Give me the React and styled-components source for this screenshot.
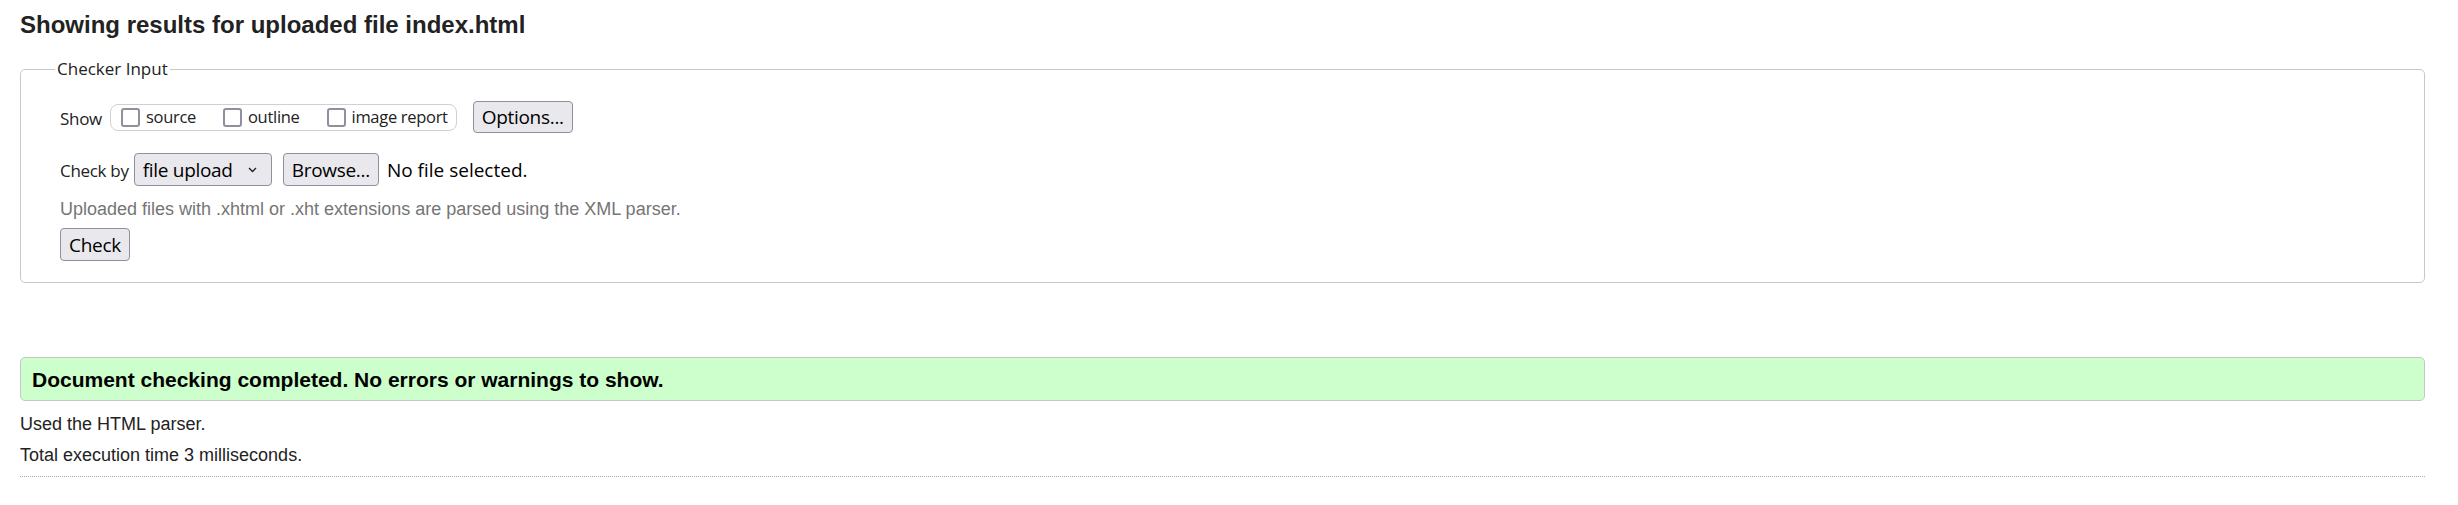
import React from 'react';
import styled, { createGlobalStyle } from 'styled-components';

const GlobalStyle = createGlobalStyle`
    body {
        margin: 0;
        background: #fff;
        color: #222;
        font-family: "Liberation Sans", Arial, sans-serif;
    }
`;

const Page = styled.div`
    padding: 10px 33px 0 20px;
`;

const Title = styled.h2`
    margin: 0;
    font-size: 24px;
    line-height: 30px;
    font-weight: bold;
    color: #222;
`;

const Fieldset = styled.fieldset`
    margin: 18px 0 0;
    padding: 21px 38px 21px 39px;
    min-width: 0;
    border: 1px solid #c8c8c8;
    border-radius: 5px;
    font-family: "Open Sans", "Noto Sans", sans-serif;
    letter-spacing: -0.3px;
`;

const Legend = styled.legend`
    margin-left: -5px;
    padding: 0 2px;
    font-size: 17px;
    line-height: 22px;
    letter-spacing: 0;
    color: #222;
`;

const Row = styled.div`
    display: flex;
    align-items: center;
    height: ${p => p.$h}px;
    margin-top: ${p => p.$mt || 0}px;
`;

const Label = styled.span`
    padding-top: 3px;
    font-size: 17px;
    line-height: 22px;
    color: #222;
`;

const Pill = styled.div`
    display: flex;
    align-items: center;
    gap: 27px;
    height: 25px;
    margin-left: 8px;
    padding: 0 8px 0 10px;
    border: 1px solid #d0d0d0;
    border-radius: 8px;
`;

const Option = styled.label`
    display: flex;
    align-items: center;
    gap: 6px;
    font-size: 16.5px;
    line-height: 22px;
    color: #222;
`;

const Box = styled.input.attrs({ type: 'checkbox' })`
    appearance: none;
    margin: 0;
    width: 19px;
    height: 19px;
    border: 2px solid #8f8f9d;
    border-radius: 3px;
    background: #fff;
`;

const Button = styled.button`
    height: ${p => p.$h || 33}px;
    margin-left: ${p => p.$ml || 0}px;
    padding: 0 8px;
    font-family: "Open Sans", "Noto Sans", sans-serif;
    font-size: 19px;
    line-height: 26px;
    letter-spacing: -0.3px;
    color: #000;
    background: #e9e9ed;
    border: 1px solid #8f8f9d;
    border-radius: 4px;
`;

const SelectBox = styled.div`
    display: flex;
    align-items: center;
    gap: 15px;
    height: 33px;
    margin-left: 5px;
    padding: 0 14px 0 8px;
    background: #e9e9ed;
    border: 1px solid #8f8f9d;
    border-radius: 4px;
    box-sizing: border-box;

    select {
        appearance: none;
        margin: 0;
        padding: 0;
        border: 0;
        background: transparent;
        font-family: "Open Sans", "Noto Sans", sans-serif;
        font-size: 19px;
        letter-spacing: -0.3px;
        color: #000;
    }
`;

const FileName = styled.span`
    margin-left: 8px;
    font-size: 19px;
    letter-spacing: 0;
    color: #000;
`;

const Hint = styled.p`
    margin: 12px 0 0;
    font-family: "Liberation Sans", Arial, sans-serif;
    font-size: 18px;
    line-height: 22px;
    letter-spacing: 0;
    color: #757575;
`;

const Success = styled.div`
    margin-top: 74px;
    padding: 9px 11px 7px;
    background: #ccffcc;
    border: 1px solid #c6c6c6;
    border-radius: 5px;
    font-size: 21px;
    font-weight: bold;
    line-height: 26px;
    color: #000;
`;

const Info = styled.p`
    margin: ${p => p.$mt}px 0 0;
    font-size: 18px;
    line-height: 22px;
    color: #222;
`;

const Rule = styled.hr`
    margin: 10px 0 0;
    border: 0;
    border-top: 1px dotted #aaa;
`;

const Chevron = () => (
    <svg width="9" height="6" viewBox="0 0 9 6" fill="none">
        <path d="M1 1l3.5 3.5L8 1" stroke="#222" strokeWidth="1.4" />
    </svg>
);

export default function App() {
    return (
        <Page>
            <GlobalStyle />
            <Title>Showing results for uploaded file index.html</Title>
            <Fieldset>
                <Legend>Checker Input</Legend>
                <Row $h={32}>
                    <Label>Show</Label>
                    <Pill>
                        <Option><Box />source</Option>
                        <Option><Box />outline</Option>
                        <Option><Box />image report</Option>
                    </Pill>
                    <Button $h={32} $ml={16}>Options...</Button>
                </Row>
                <Row $h={33} $mt={20}>
                    <Label>Check by</Label>
                    <SelectBox>
                        <select defaultValue="file">
                            <option value="file">file upload</option>
                        </select>
                        <Chevron />
                    </SelectBox>
                    <Button $ml={11}>Browse...</Button>
                    <FileName>No file selected.</FileName>
                </Row>
                <Hint>Uploaded files with .xhtml or .xht extensions are parsed using the XML parser.</Hint>
                <Row $h={33} $mt={8}>
                    <Button>Check</Button>
                </Row>
            </Fieldset>
            <Success>Document checking completed. No errors or warnings to show.</Success>
            <Info $mt={12}>Used the HTML parser.</Info>
            <Info $mt={9}>Total execution time 3 milliseconds.</Info>
            <Rule />
        </Page>
    );
}
